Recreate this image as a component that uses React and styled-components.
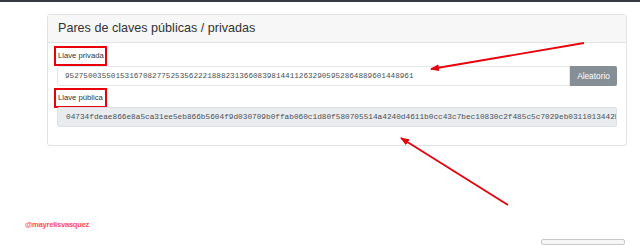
import styled, {createGlobalStyle} from "styled-components";

const GlobalStyle = createGlobalStyle`
  body {
    margin: 0;
    background: #fff;
    font-family: "Liberation Sans", Arial, sans-serif;
  }
`;

const Page = styled.div`
  position: relative;
  width: 640px;
  height: 245px;
  overflow: hidden;
  display: flex;
  flex-direction: column;
`;

const TopBar = styled.div`
  height: 4px;
  background-color: #343a40;
`;

const Card = styled.div`
  margin: 12px 0 0 47px;
  width: 578px;
  border: 1px solid #e3e3e3;
  border-radius: 3px;
  background: #fff;
`;

const CardHeader = styled.div`
  height: 27px;
  display: flex;
  align-items: center;
  padding: 0 10px;
  background-color: #f7f7f7;
  border-bottom: 1px solid #e3e3e3;
  color: #333;
  font-size: 12.6px;
`;

const CardBody = styled.div`
  padding: 3px 9px 18px 9px;
`;

const Field = styled.div`
  display: flex;
  flex-direction: column;
  align-items: flex-start;
  margin-top: ${({first}) => first ? "0" : "2px"};
`;

// red annotation box round the label
const LabelBox = styled.label`
  display: flex;
  align-items: center;
  box-sizing: border-box;
  width: 53px;
  height: 20px;
  margin-left: -3px;
  padding-left: 2px;
  border: 2px solid #e8000b;
  color: #333;
  font-size: 7.7px;
  white-space: nowrap;
`;

const InputGroup = styled.div`
  display: flex;
  width: 100%;
  height: 20px;
  margin-top: ${({tight}) => tight ? "-1px" : "0"};
`;

const KeyInput = styled.div`
  flex: 1;
  min-width: 0;
  box-sizing: border-box;
  display: flex;
  align-items: center;
  padding: 0 7px 0 ${({readOnly}) => readOnly ? "8px" : "7px"};
  border: 1px solid ${({readOnly}) => readOnly ? "#dde1e5" : "#e3e6e9"};
  border-radius: ${({readOnly}) => readOnly ? "2px" : "2px 0 0 2px"};
  background-color: ${({readOnly}) => readOnly ? "#e9ecef" : "#fff"};
  color: #495057;
  font-family: "Liberation Mono", "DejaVu Sans Mono", monospace;
  font-size: ${({readOnly}) => readOnly ? "7.75px" : "7.65px"};
  white-space: nowrap;
  overflow: hidden;
`;

const RandomButton = styled.button`
  width: 47px;
  height: 20px;
  padding: 0;
  border: none;
  border-radius: 0 2px 2px 0;
  background-color: #868e96;
  color: #fff;
  font-family: "Liberation Sans", Arial, sans-serif;
  font-size: 8.3px;
`;

const Signature = styled.div`
  margin: 74px 0 0 25px;
  color: #ff4d55;
  font-size: 7.5px;
  font-weight: bold;
  letter-spacing: -0.2px;
`;

const BottomWidget = styled.div`
  align-self: flex-end;
  margin: 10px 15px 0 0;
  width: 82px;
  height: 10px;
  border: 1px solid #c8c8c8;
  border-radius: 2px;
  background: #f6f6f6;
`;

const Overlay = styled.svg`
  position: absolute;
  top: 0;
  left: 0;
  pointer-events: none;
`;

const privateKey = "9527500355015316708277525356222188823136608398144112632905952864889601448961";
const publicKey = "04734fdeae866e8a5ca31ee5eb866b5604f9d030709b0ffab060c1d80f580705514a4240d4611b0cc43c7bec10830c2f485c5c7029eb0311013442b8a9c6d1e4";

const Arrows = () => (
  <Overlay width="640" height="245">
    <defs>
      <marker id="head" markerWidth="9" markerHeight="7" refX="8" refY="3.5" orient="auto" markerUnits="userSpaceOnUse">
        <polygon points="0 0, 9 3.5, 0 7" fill="#e8000b"/>
      </marker>
    </defs>
    <line x1="584" y1="43" x2="431" y2="69" stroke="#e8000b" strokeWidth="1.8" markerEnd="url(#head)"/>
    <line x1="508" y1="205" x2="401" y2="138" stroke="#e8000b" strokeWidth="1.8" markerEnd="url(#head)"/>
  </Overlay>
);

const App = () => {
  return (
    <Page>
      <GlobalStyle/>
      <TopBar/>
      <Card>
        <CardHeader>Pares de claves públicas / privadas</CardHeader>
        <CardBody>
          <Field first>
            <LabelBox>Llave privada</LabelBox>
            <InputGroup>
              <KeyInput>{privateKey}</KeyInput>
              <RandomButton>Aleatorio</RandomButton>
            </InputGroup>
          </Field>
          <Field>
            <LabelBox>Llave pública</LabelBox>
            <InputGroup tight>
              <KeyInput readOnly>{publicKey}</KeyInput>
            </InputGroup>
          </Field>
        </CardBody>
      </Card>
      <Signature>@mayrelisvasquez</Signature>
      <BottomWidget/>
      <Arrows/>
    </Page>
  );
};

export default App;
